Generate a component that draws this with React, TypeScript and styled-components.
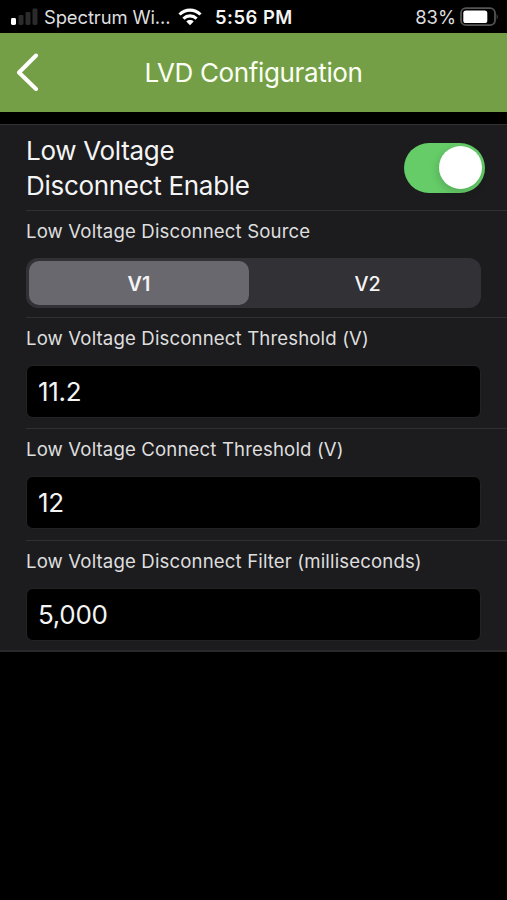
import React, { useState } from "react";
import styled, { createGlobalStyle } from "styled-components";

const GlobalStyle = createGlobalStyle`
  * { box-sizing: border-box; }
  body {
    margin: 0;
    background: #000;
    color: #f4f4f5;
    font-family: Inter, "Liberation Sans", sans-serif;
  }
  button, input { font: inherit; color: inherit; border: 0; padding: 0; background: none; }
`;

const Screen = styled.div`
  width: 507px;
  height: 900px;
  overflow: hidden;
  background: #000;
`;

const StatusBar = styled.div`
  display: grid;
  grid-template-columns: 204px 1fr 204px;
  align-items: center;
  height: 33px;
  padding: 1px 8px 0 11px;
  font-size: 18.4px;
  line-height: 30px;
  white-space: nowrap;
`;

const Carrier = styled.div`
  display: flex;
  align-items: center;
  color: #dededf;
`;

const CarrierName = styled.span`
  width: 128px;
  margin: 0 6px 0 6px;
  letter-spacing: -0.1px;
`;

const Clock = styled.div`
  font-weight: 600;
  letter-spacing: 0.5px;
`;

const Power = styled.div`
  display: flex;
  align-items: center;
  justify-content: flex-end;
  gap: 4px;
  color: #dededf;
`;

const Header = styled.header`
  display: grid;
  grid-template-columns: 72px 1fr 72px;
  align-items: center;
  height: 79px;
  background: #759f47;
`;

const BackButton = styled.button`
  display: flex;
  padding-left: 15px;
`;

const Title = styled.h1`
  margin: 0;
  font-size: 26px;
  font-weight: 400;
  line-height: 32px;
  letter-spacing: -0.36px;
  text-align: center;
  white-space: nowrap;
  color: #fbfff5;
`;

const Panel = styled.main`
  height: 528px;
  margin-top: 12px;
  padding-left: 26px;
  background: #1c1c1e;
  border-top: 1px solid #303032;
  border-bottom: 2px solid #29292b;
`;

const Row = styled.section<{ $height: number }>`
  height: ${(p) => p.$height}px;
  padding-right: 26px;
  & + & { border-top: 1px solid #303032; }
`;

const ToggleRow = styled(Row)`
  display: flex;
  align-items: center;
  justify-content: space-between;
  padding-right: 22px;
`;

const ToggleLabel = styled.div`
  width: 260px;
  font-size: 26px;
  line-height: 35px;
  letter-spacing: -0.3px;
`;

const Switch = styled.button<{ $on: boolean }>`
  display: flex;
  justify-content: ${(p) => (p.$on ? "flex-end" : "flex-start")};
  width: 81px;
  height: 50px;
  padding: 3px;
  border-radius: 25px;
  background: ${(p) => (p.$on ? "#65cc68" : "#39393d")};
`;

const Knob = styled.span`
  width: 43px;
  height: 43px;
  border-radius: 50%;
  background: #fff;
  box-shadow: -1px 3px 8px rgba(0, 0, 0, 0.16);
`;

const Label = styled.div`
  padding-top: 8px;
  font-size: 18.6px;
  line-height: 25px;
  letter-spacing: 0.14px;
  white-space: nowrap;
  color: #dededf;
`;

const Segments = styled.div`
  display: grid;
  grid-template-columns: 220px 1fr;
  column-gap: 5px;
  width: 455px;
  height: 50px;
  margin-top: 14px;
  padding: 3px 0 3px 3px;
  border-radius: 12px;
  background: #323136;
`;

const Segment = styled.button<{ $active: boolean }>`
  padding-top: 1px;
  border-radius: 10px;
  font-size: 19.8px;
  font-weight: ${(p) => (p.$active ? 600 : 500)};
  background: ${(p) => (p.$active ? "#6a686f" : "transparent")};
`;

const Field = styled.input`
  display: block;
  width: 455px;
  height: 53px;
  margin-top: 14px;
  padding: 0 11px;
  border: 1px solid #232325;
  border-radius: 7px;
  background: #000;
  font-size: 26px;
  letter-spacing: -0.3px;
  outline: none;
`;

const SignalIcon = () => (
  <svg width="27" height="18" viewBox="0 0 27 18">
    <rect x="0" y="10" width="5" height="7" rx="1.4" fill="#fff" />
    <rect x="7.5" y="7" width="5" height="10" rx="1.4" fill="#2b2b2b" />
    <rect x="14.5" y="4" width="5" height="13" rx="1.4" fill="#2b2b2b" />
    <rect x="21.5" y="0.5" width="5" height="16.5" rx="1.4" fill="#2b2b2b" />
  </svg>
);

const WifiIcon = () => (
  <svg width="24" height="18" viewBox="0 0 24 18" fill="none" stroke="#fff" strokeWidth="3.1">
    <path d="M1.5 6.5C7.5 .6 16.5 .6 22.5 6.5" />
    <path d="M5.4 10.6C9.2 7 14.8 7 18.6 10.6" />
    <path d="M12 17.2L8.3 13.5C10.4 11.6 13.6 11.6 15.7 13.5Z" fill="#fff" stroke="none" />
  </svg>
);

const BatteryIcon = () => (
  <svg width="39" height="20" viewBox="0 0 39 20">
    <rect x="1" y="1.2" width="34" height="17" rx="5" fill="none" stroke="#545454" strokeWidth="1.8" />
    <rect x="3.3" y="3.6" width="24" height="12.4" rx="2.6" fill="#fff" />
    <path d="M36.7 6.8Q38.7 9.8 36.7 12.8Z" fill="#545454" />
  </svg>
);

const BackIcon = () => (
  <svg width="26" height="40" viewBox="0 0 26 40" fill="none" stroke="#fff" strokeWidth="4" strokeLinecap="round" strokeLinejoin="round">
    <path d="M21 2.5L4 19.5L21 36" />
  </svg>
);

const fields = [
  { label: "Low Voltage Disconnect Threshold (V)", value: "11.2", height: 111 },
  { label: "Low Voltage Connect Threshold (V)", value: "12", height: 112 },
  { label: "Low Voltage Disconnect Filter (milliseconds)", value: "5,000", height: 110 },
];

export default function App() {
  const [enabled, setEnabled] = useState(true);
  const [source, setSource] = useState("V1");
  return (
    <Screen>
      <GlobalStyle />
      <StatusBar>
        <Carrier>
          <SignalIcon />
          <CarrierName>Spectrum Wi...</CarrierName>
          <WifiIcon />
        </Carrier>
        <Clock>5:56 PM</Clock>
        <Power>
          <span>83%</span>
          <BatteryIcon />
        </Power>
      </StatusBar>
      <Header>
        <BackButton aria-label="Back">
          <BackIcon />
        </BackButton>
        <Title>LVD Configuration</Title>
      </Header>
      <Panel>
        <ToggleRow $height={85}>
          <ToggleLabel>Low Voltage Disconnect Enable</ToggleLabel>
          <Switch $on={enabled} role="switch" aria-checked={enabled} onClick={() => setEnabled(!enabled)}>
            <Knob />
          </Switch>
        </ToggleRow>
        <Row $height={107}>
          <Label>Low Voltage Disconnect Source</Label>
          <Segments>
            {["V1", "V2"].map((name) => (
              <Segment key={name} $active={source === name} onClick={() => setSource(name)}>
                {name}
              </Segment>
            ))}
          </Segments>
        </Row>
        {fields.map((f) => (
          <Row key={f.label} $height={f.height}>
            <Label>{f.label}</Label>
            <Field defaultValue={f.value} aria-label={f.label} />
          </Row>
        ))}
      </Panel>
    </Screen>
  );
}
